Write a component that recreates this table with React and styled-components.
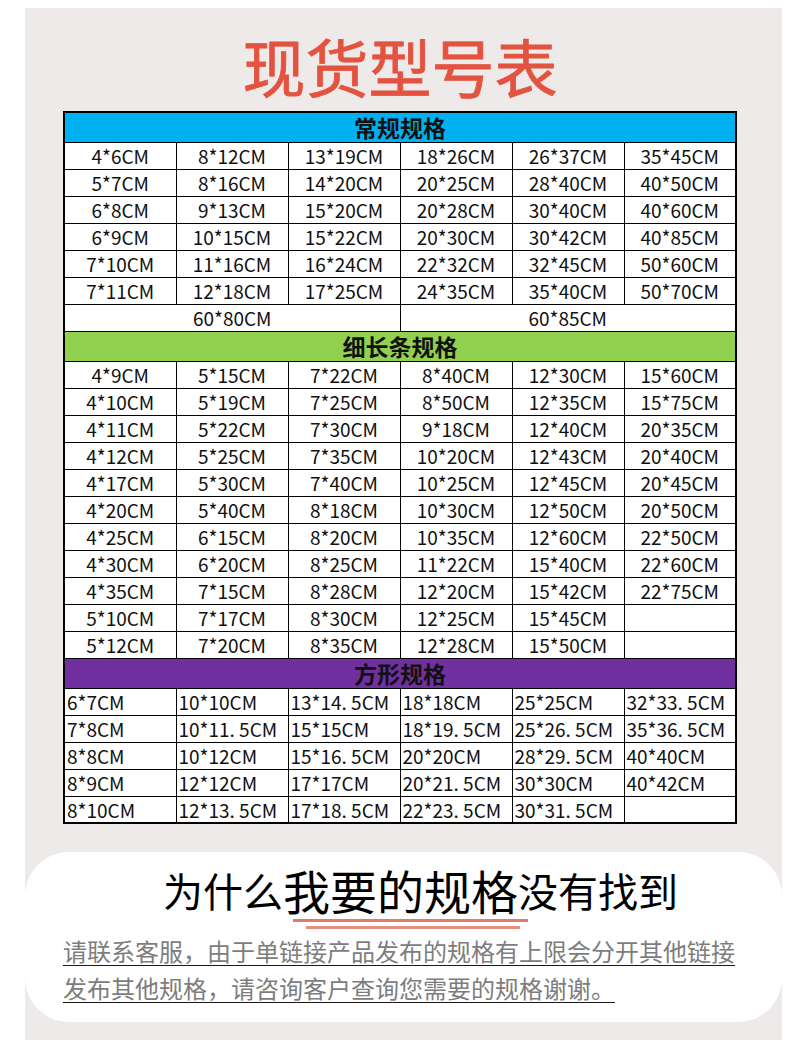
import React from 'react';
import styled, { createGlobalStyle } from 'styled-components';

const GlobalStyle = createGlobalStyle`
  body {
    margin: 0;
    background: #ffffff;
    font-family: "Noto Sans CJK SC", "Noto Sans", sans-serif;
  }
`;

const Panel = styled.div`
  width: 757px;
  height: 1032px;
  margin: 8px 0 0 25px;
  background: #edeae9;
  display: flex;
  flex-direction: column;
`;

const Title = styled.h1`
  margin: 18px 0 7px 38px;
  width: 674px;
  text-align: center;
  font-size: 63px;
  line-height: 78px;
  font-weight: 400;
  -webkit-text-stroke: 0.8px #e3533f;
  color: #e3533f;
`;

const SizeTable = styled.table`
  margin-left: 38px;
  width: 674px;
  border-collapse: collapse;
  table-layout: fixed;
  border: 2px solid #000;
  background: #fff;
`;

const SectionRow = styled.tr`
  height: 30px;
`;

const SectionCell = styled.td`
  padding: 0;
  background: ${(p) => p.$bg};
  border: 1px solid #000;
  text-align: center;
  font-size: 23px;
  font-weight: 700;
  line-height: 28px;
  color: #111;
`;

const Row = styled.tr`
  height: 27px;
`;

const Cell = styled.td`
  padding: 0 0 0 ${(p) => (p.$left ? '2px' : '0')};
  border: 1px solid #000;
  text-align: ${(p) => (p.$left ? 'left' : 'center')};
  font-size: 19px;
  line-height: 25px;
  color: #111;
  white-space: nowrap;
  overflow: hidden;
`;

const Card = styled.div`
  margin-top: 28px;
  height: 170px;
  background: #ffffff;
  border-radius: 44px;
  display: flex;
  flex-direction: column;
`;

const Question = styled.div`
  margin: 14px 0 0 138px;
  height: 48px;
  display: flex;
  align-items: flex-end;
  color: #000;
  font-size: 40px;
  line-height: 48px;
  white-space: nowrap;
`;

const Emphasis = styled.span`
  position: relative;
  font-size: 47px;
  line-height: 48px;

  &::before,
  &::after {
    content: '';
    position: absolute;
    height: 3px;
    background: #e07a6c;
  }
  &::before {
    left: 10px;
    right: -10px;
    bottom: -8px;
  }
  &::after {
    left: 23px;
    right: -2px;
    bottom: -15px;
    opacity: 0.85;
  }
`;

const Note = styled.p`
  margin: 18px 0 0 38px;
  width: 680px;
  font-size: 24px;
  line-height: 37px;
  color: #7d7d7d;
  text-decoration: underline;
  text-decoration-color: #1a1a1a;
  text-decoration-thickness: 1px;
  text-underline-offset: 4px;
`;

const regular = [
  ['4*6', '8*12', '13*19', '18*26', '26*37', '35*45'],
  ['5*7', '8*16', '14*20', '20*25', '28*40', '40*50'],
  ['6*8', '9*13', '15*20', '20*28', '30*40', '40*60'],
  ['6*9', '10*15', '15*22', '20*30', '30*42', '40*85'],
  ['7*10', '11*16', '16*24', '22*32', '32*45', '50*60'],
  ['7*11', '12*18', '17*25', '24*35', '35*40', '50*70'],
];

const slim = [
  ['4*9', '5*15', '7*22', '8*40', '12*30', '15*60'],
  ['4*10', '5*19', '7*25', '8*50', '12*35', '15*75'],
  ['4*11', '5*22', '7*30', '9*18', '12*40', '20*35'],
  ['4*12', '5*25', '7*35', '10*20', '12*43', '20*40'],
  ['4*17', '5*30', '7*40', '10*25', '12*45', '20*45'],
  ['4*20', '5*40', '8*18', '10*30', '12*50', '20*50'],
  ['4*25', '6*15', '8*20', '10*35', '12*60', '22*50'],
  ['4*30', '6*20', '8*25', '11*22', '15*40', '22*60'],
  ['4*35', '7*15', '8*28', '12*20', '15*42', '22*75'],
  ['5*10', '7*17', '8*30', '12*25', '15*45', ''],
  ['5*12', '7*20', '8*35', '12*28', '15*50', ''],
];

const square = [
  ['6*7', '10*10', '13*14. 5', '18*18', '25*25', '32*33. 5'],
  ['7*8', '10*11. 5', '15*15', '18*19. 5', '25*26. 5', '35*36. 5'],
  ['8*8', '10*12', '15*16. 5', '20*20', '28*29. 5', '40*40'],
  ['8*9', '12*12', '17*17', '20*21. 5', '30*30', '40*42'],
  ['8*10', '12*13. 5', '17*18. 5', '22*23. 5', '30*31. 5', ''],
];

function Section({ title, bg, rows, left }) {
  return (
    <>
      <SectionRow>
        <SectionCell colSpan={6} $bg={bg}>{title}</SectionCell>
      </SectionRow>
      {rows.map((r, i) => (
        <Row key={i}>
          {r.map((v, j) => (
            <Cell key={j} $left={left}>{v ? `${v}CM` : ''}</Cell>
          ))}
        </Row>
      ))}
    </>
  );
}

export default function App() {
  return (
    <>
      <GlobalStyle />
      <Panel>
        <Title>现货型号表</Title>
        <SizeTable>
          <colgroup>
            {[0, 1, 2, 3, 4, 5].map((i) => <col key={i} />)}
          </colgroup>
          <tbody>
            <Section title="常规规格" bg="#00b0f0" rows={regular} />
            <Row>
              <Cell colSpan={3}>60*80CM</Cell>
              <Cell colSpan={3}>60*85CM</Cell>
            </Row>
            <Section title="细长条规格" bg="#92d050" rows={slim} />
            <Section title="方形规格" bg="#7030a0" rows={square} left />
          </tbody>
        </SizeTable>
        <Card>
          <Question>
            为什么<Emphasis>我要的规格</Emphasis>没有找到
          </Question>
          <Note>
            请联系客服，由于单链接产品发布的规格有上限会分开其他链接发布其他规格，请咨询客户查询您需要的规格谢谢。
          </Note>
        </Card>
      </Panel>
    </>
  );
}
